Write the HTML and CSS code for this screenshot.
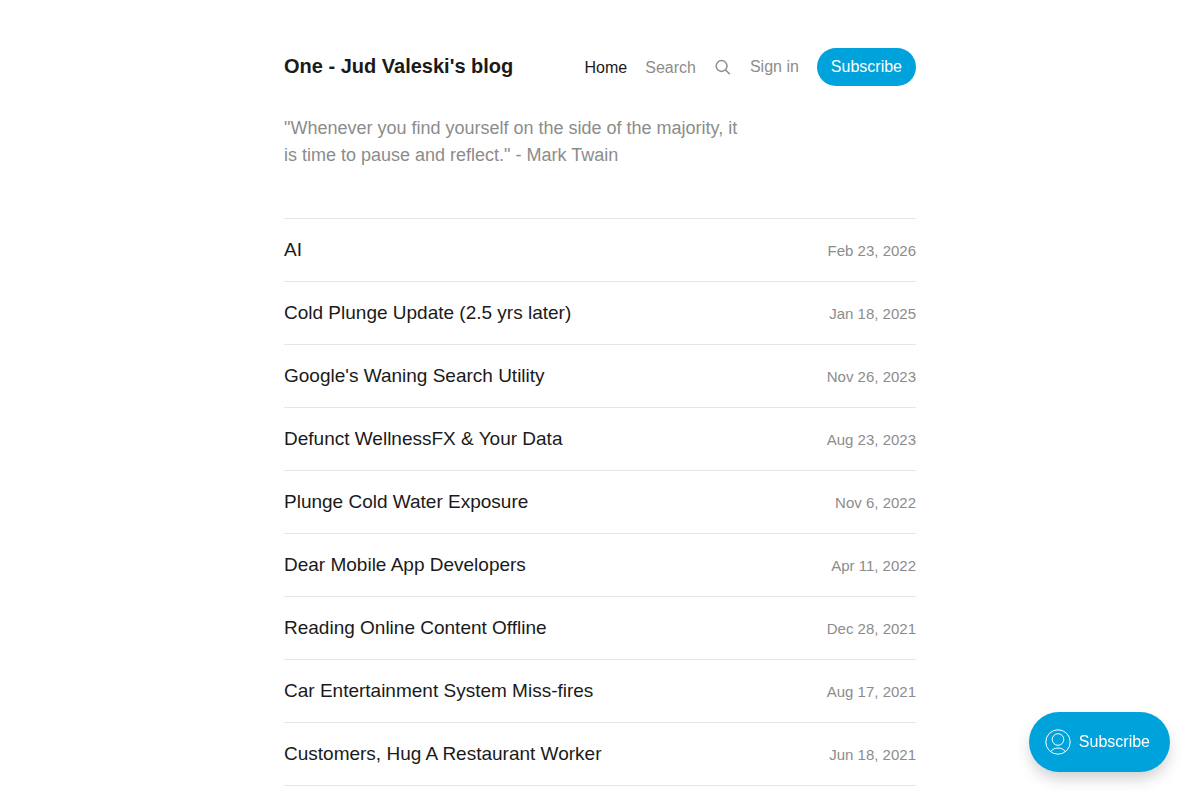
FILE: index.html
```html
<!DOCTYPE html>
<html lang="en">
<head>
  <meta charset="UTF-8" />
  <meta name="viewport" content="width=device-width, initial-scale=1.0" />
  <title>One - Jud Valeski's blog</title>
  <link rel="stylesheet" href="styles.css">
</head>
<body>
  <div class="container">
    <header class="header">
      <a class="site-title" href="#">One - Jud Valeski's blog</a>
      <nav class="nav">
        <a class="nav-link current" href="#">Home</a>
        <a class="nav-link" href="#">Search</a>
        <button class="search-button" type="button" aria-label="Search this site">
          <svg width="18" height="18" viewBox="0 0 18 18" fill="none" stroke="currentColor" stroke-width="1.5" stroke-linecap="round">
            <circle cx="7.6" cy="8" r="5.4" />
            <path d="M11.6 12l3.800 3.800" />
          </svg>
        </button>
        <a class="nav-account" href="#">Sign in</a>
        <a class="subscribe" href="#">Subscribe</a>
      </nav>
    </header>

    <p class="description">"Whenever you find yourself on the side of the majority, it is time to pause and reflect." - Mark Twain</p>

    <main class="post-feed">
      <article class="post">
        <h2><a href="#">AI</a></h2>
        <time datetime="2026-02-23">Feb 23, 2026</time>
      </article>
      <article class="post">
        <h2><a href="#">Cold Plunge Update (2.5 yrs later)</a></h2>
        <time datetime="2025-01-18">Jan 18, 2025</time>
      </article>
      <article class="post">
        <h2><a href="#">Google's Waning Search Utility</a></h2>
        <time datetime="2023-11-26">Nov 26, 2023</time>
      </article>
      <article class="post">
        <h2><a href="#">Defunct WellnessFX &amp; Your Data</a></h2>
        <time datetime="2023-08-23">Aug 23, 2023</time>
      </article>
      <article class="post">
        <h2><a href="#">Plunge Cold Water Exposure</a></h2>
        <time datetime="2022-11-06">Nov 6, 2022</time>
      </article>
      <article class="post">
        <h2><a href="#">Dear Mobile App Developers</a></h2>
        <time datetime="2022-04-11">Apr 11, 2022</time>
      </article>
      <article class="post">
        <h2><a href="#">Reading Online Content Offline</a></h2>
        <time datetime="2021-12-28">Dec 28, 2021</time>
      </article>
      <article class="post">
        <h2><a href="#">Car Entertainment System Miss-fires</a></h2>
        <time datetime="2021-08-17">Aug 17, 2021</time>
      </article>
      <article class="post">
        <h2><a href="#">Customers, Hug A Restaurant Worker</a></h2>
        <time datetime="2021-06-18">Jun 18, 2021</time>
      </article>
    </main>
  </div>

  <button class="portal-trigger" type="button">
    <svg width="26" height="26" viewBox="0 0 26 26" fill="none" stroke="currentColor" stroke-width="1">
      <circle cx="13" cy="13" r="12.2" />
      <circle cx="13" cy="10.5" r="5.8" />
      <path d="M5.6 22.6c1.8-2.4 4.4-3.6 7.4-3.6s5.6 1.2 7.4 3.6" />
    </svg>
    <span>Subscribe</span>
  </button>
</body>
</html>
```

FILE: styles.css
```css
* {
  box-sizing: border-box;
}
body {
  margin: 0;
  font-family: "Liberation Sans", Arial, sans-serif;
  font-size: 16px;
  color: #1a1a1a;
  background: #fff;
}
a {
  color: inherit;
  text-decoration: none;
}
button {
  border: none;
  padding: 0;
  font: inherit;
  cursor: pointer;
}
svg {
  display: block;
}
.container {
  max-width: 680px;
  margin: 0 auto;
  padding: 48px 24px 0;
}
.header {
  display: flex;
  align-items: center;
  justify-content: space-between;
}
.site-title {
  font-size: 20px;
  font-weight: bold;
  line-height: 24px;
  padding-bottom: 2px;
}
.nav {
  display: flex;
  align-items: center;
  gap: 18px;
}
.nav-link,
.nav-account,
.search-button {
  color: #8c8c8c;
}
.nav-link {
  line-height: 20px;
  padding-top: 2px;
}
.nav-link.current {
  color: #1a1a1a;
}
.nav-account {
  line-height: 20px;
}
.search-button {
  background: none;
}
.subscribe {
  padding: 9px 14px;
  line-height: 20px;
  color: #fff;
  background: #00a2db;
  border-radius: 19px;
}
.description {
  max-width: 464px;
  margin: 29px 0 49px;
  font-size: 18px;
  line-height: 27px;
  color: #8c8c8c;
}
.post-feed {
  border-top: 1px solid #e6e6e6;
}
.post {
  display: flex;
  align-items: baseline;
  justify-content: space-between;
  gap: 16px;
  padding: 18px 0;
  border-bottom: 1px solid #e6e6e6;
}
.post h2 {
  margin: 0;
  font-size: 19px;
  font-weight: normal;
  line-height: 26px;
}
.post time {
  flex-shrink: 0;
  font-size: 15px;
  line-height: 20px;
  color: #8c8c8c;
}
.portal-trigger {
  position: fixed;
  right: 30px;
  bottom: 28px;
  display: flex;
  align-items: center;
  gap: 8px;
  height: 60px;
  padding: 0 20px 0 16px;
  color: #fff;
  background: #00a2db;
  border-radius: 30px;
  box-shadow: 0 8px 16px -2px rgba(0, 0, 0, 0.2);
}
```
